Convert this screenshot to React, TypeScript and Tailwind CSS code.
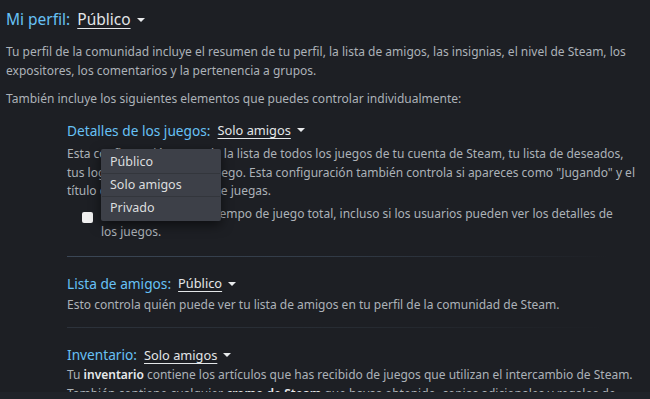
import React from "react";

const Caret = () => (
  <span className="ml-[6px] inline-block h-0 w-0 border-x-[4px] border-t-[4px] border-x-transparent border-t-[#e8eaec] align-middle" />
);

const Setting = ({
  label,
  value,
  size = "text-[13.7px]",
  valueSize = "text-[12.8px]",
}: {
  label: string;
  value: string;
  size?: string;
  valueSize?: string;
}) => (
  <div className="flex items-center leading-none">
    <span className={`${size} text-[#67c1f5]`}>{label}</span>
    <span className={`ml-[7px] ${valueSize} text-[#e3e6e8] underline decoration-1 underline-offset-[3px]`}>{value}</span>
    <Caret />
  </div>
);

const Divider = ({ strong }: { strong?: boolean }) => (
  <div
    className={`h-px w-[540px] bg-gradient-to-r ${
      strong ? "from-[#3b4756] via-[#313a46]" : "from-[#2c323b] via-[#272c33]"
    } to-transparent`}
  />
);

export default function App() {
  return (
    <div
      className="relative h-[399px] w-[650px] overflow-hidden bg-[#1d1f24] text-[12px] text-[#acb2b8]"
      style={{ fontFamily: '"Noto Sans", Arial, sans-serif' }}
    >
      <div className="pl-[6px] pr-[10px] pt-[12px]">
        <Setting label="Mi perfil:" value="Público" size="text-[15.5px]" valueSize="text-[15.5px]" />
        <p className="mt-[14px] leading-[19px]">
          Tu perfil de la comunidad incluye el resumen de tu perfil, la lista de amigos, las insignias, el nivel de Steam, los
          expositores, los comentarios y la pertenencia a grupos.
        </p>
        <p className="mt-[9px] leading-[19px]">También incluye los siguientes elementos que puedes controlar individualmente:</p>

        <div className="ml-[61px] mt-[16px] w-[570px]">
          <div className="relative">
            <Setting label="Detalles de los juegos:" value="Solo amigos" />
            <p className="mt-[8px] leading-[18.5px]">
              Esta configuración controla la lista de todos los juegos de tu cuenta de Steam, tu lista de deseados, tus
              logros y tu tiempo de juego. Esta configuración también controla si apareces como "Jugando" y el
              título de los juegos a los que juegas.
            </p>
            <div className="mt-[4px] flex gap-[8px] pl-[15px] pr-[12px]">
              <div className="mt-[7px] h-[11px] w-[11px] shrink-0 rounded-[2px] bg-[#f0f0f0]" />
              <p className="leading-[18.5px]">
                Ocultar siempre mi tiempo de juego total, incluso si los usuarios pueden ver los detalles de los juegos.
              </p>
            </div>

            <div className="absolute left-[34px] top-[25px] w-[120px] rounded-[2px] bg-[#3d4048] py-[2px] text-[12.5px] text-[#dcdedf] shadow-[0_4px_12px_rgba(0,0,0,0.55)]">
              <div className="px-[9px] py-[3px] leading-[16px]">Público</div>
              <div className="mx-[1px] h-px bg-[#33363c]" />
              <div className="px-[9px] py-[3px] leading-[16px]">Solo amigos</div>
              <div className="mx-[1px] h-px bg-[#33363c]" />
              <div className="px-[9px] py-[3px] leading-[16px]">Privado</div>
            </div>
          </div>

          <div className="mt-[14px]">
            <Divider strong />
          </div>

          <div className="mt-[20px]">
            <Setting label="Lista de amigos:" value="Público" />
            <p className="mt-[5px] leading-[19px]">
              Esto controla quién puede ver tu lista de amigos en tu perfil de la comunidad de Steam.
            </p>
          </div>

          <div className="mt-[13px]">
            <Divider />
          </div>

          <div className="mt-[20px]">
            <Setting label="Inventario:" value="Solo amigos" />
            <p className="mt-[3px] leading-[19px]">
              Tu <b className="font-semibold text-[#e8eaec]">inventario</b> contiene los artículos que has recibido de juegos que utilizan el intercambio de Steam.
              También contiene cualquier <b className="font-semibold text-[#e8eaec]">cromo de Steam</b> que hayas obtenido, copias adicionales y regalos de
              juegos.
            </p>
          </div>
        </div>
      </div>
      <div className="absolute bottom-0 left-0 h-[7px] w-full bg-[#202329]" />
    </div>
  );
}
